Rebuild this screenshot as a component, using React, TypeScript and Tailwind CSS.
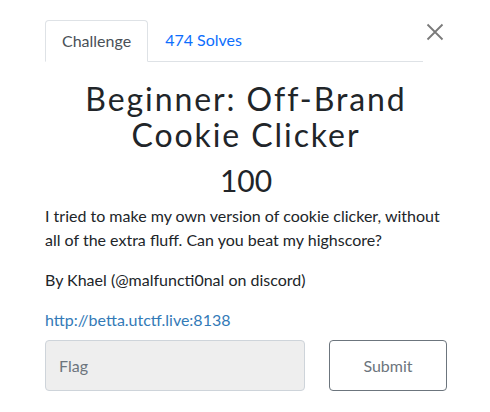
import React from "react";

export default function App() {
  return (
    <div className="relative w-[490px] h-[412px] bg-white overflow-hidden text-[#212529]" style={{ fontFamily: "Lato, 'Open Sans', sans-serif" }}>
      <button className="absolute left-[426px] top-[23px] w-[18px] h-[18px] flex items-center justify-center" aria-label="Close">
        <svg width="18" height="18" viewBox="0 0 18 18" fill="none" stroke="#7a7a7a" strokeWidth="1.8">
          <path d="M1.5 1.5 L16.5 16.5 M16.5 1.5 L1.5 16.5" />
        </svg>
      </button>
      <div className="pl-[45px] pt-[20px] w-[447px]">
        <div className="flex w-[378px] border-b border-[#dee2e6]">
          <div className="-mb-px px-[16px] py-[8px] leading-[24px] text-[16px] text-[#495057] bg-white border border-[#dee2e6] border-b-white rounded-t-[4px]">
            Challenge
          </div>
          <div className="px-[17px] py-[8px] leading-[24px] text-[16px] text-[#0d6efd]">474 Solves</div>
        </div>
        <h2 className="mt-[19px] text-center text-[32px] leading-[36px] tracking-[0.06em] text-[#212529]">
          Beginner: Off-Brand<br />Cookie Clicker
        </h2>
        <h3 className="mt-[9px] text-center text-[30px] leading-[36px] text-[#212529]">100</h3>
        <p className="mt-[6px] text-[16px] leading-[24px] text-[#212529]">
          I tried to make my own version of cookie clicker, without all of the extra fluff. Can you beat my highscore?
        </p>
        <p className="mt-[16px] text-[16px] leading-[24px] text-[#212529]">By Khael (@malfuncti0nal on discord)</p>
        <p className="mt-[16px] text-[16px] leading-[24px]">
          <a className="text-[#337ab7]" href="#">http://betta.utctf.live:8138</a>
        </p>
        <div className="mt-[8px] flex gap-[24px]">
          <div className="w-[260px] h-[51px] flex items-center pl-[13px] bg-[#eeeeee] border border-[#ced4da] rounded-[4px] text-[16px] text-[#6c757d]">
            Flag
          </div>
          <div className="w-[118px] h-[51px] flex items-center justify-center border border-[#6c757d] rounded-[4px] text-[16px] text-[#6c757d]">
            Submit
          </div>
        </div>
      </div>
    </div>
  );
}
